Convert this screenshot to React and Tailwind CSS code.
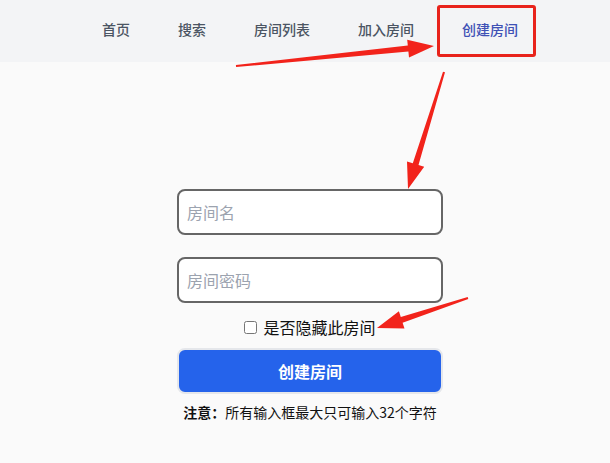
import React from "react";

const navItems = ["首页", "搜索", "房间列表", "加入房间", "创建房间"];

// tapered annotation arrow, tail -> tip
const arrowPoints = (tx, ty, px, py, w0 = 2, w1 = 5, L = 24, H = 8) => {
  const len = Math.hypot(px - tx, py - ty);
  const dx = (px - tx) / len;
  const dy = (py - ty) / len;
  const nx = -dy;
  const ny = dx;
  const bx = px - dx * L;
  const by = py - dy * L;
  const pts = [
    [tx + (nx * w0) / 2, ty + (ny * w0) / 2],
    [bx + (nx * w1) / 2, by + (ny * w1) / 2],
    [bx + nx * H, by + ny * H],
    [px, py],
    [bx - nx * H, by - ny * H],
    [bx - (nx * w1) / 2, by - (ny * w1) / 2],
    [tx - (nx * w0) / 2, ty - (ny * w0) / 2],
  ];
  return pts.map((p) => p.map((v) => v.toFixed(1)).join(",")).join(" ");
};

const Annotations = () => (
  <svg
    className="pointer-events-none absolute left-0 top-0"
    width="610"
    height="463"
    viewBox="0 0 610 463"
  >
    <polygon points={arrowPoints(236, 66, 434, 46, 2, 6, 26, 9)} fill="#f2231b" />
    <polygon points={arrowPoints(444, 72, 408, 189, 2, 6, 26, 9)} fill="#f2231b" />
    <polygon points={arrowPoints(468, 298, 377, 328, 2, 6, 26, 9)} fill="#f2231b" />
  </svg>
);

export default function App() {
  return (
    <div
      className="relative h-[463px] w-[610px] overflow-hidden bg-[#fafafa]"
      style={{ fontFamily: '"Noto Sans CJK SC", "Noto Sans", sans-serif' }}
    >
      {/* nav */}
      <nav className="flex h-[62px] items-center bg-[#f3f4f6] pl-[78px]">
        {navItems.map((item, i) => {
          const active = i === navItems.length - 1;
          return (
            <div key={item} className="relative flex h-[52px] items-center px-6">
              <span
                className={
                  "mb-[4px] text-[14px] font-medium leading-none " +
                  (active ? "text-[#3f51b5]" : "text-[#4b5563]")
                }
              >
                {item}
              </span>
              {active && (
                <div className="absolute -left-px right-[6px] top-0 bottom-0 rounded-[3px] border-[3px] border-[#e8231b]" />
              )}
            </div>
          );
        })}
      </nav>

      {/* form */}
      <div className="flex flex-col items-center pl-[10px] pt-[127px]">
        <input
          placeholder="房间名"
          className="h-[46px] w-[266px] rounded-lg border-2 border-[#666666] bg-white px-[8px] text-[16px] text-gray-800 outline-none placeholder:text-[#9ca3af]"
        />
        <input
          placeholder="房间密码"
          className="mt-[22px] h-[46px] w-[266px] rounded-lg border-2 border-[#666666] bg-white px-[8px] text-[16px] text-gray-800 outline-none placeholder:text-[#9ca3af]"
        />
        <label className="mt-[13px] flex h-[22px] items-center gap-[6px] text-[16px] leading-none text-[#111111]">
          <input type="checkbox" className="h-[13px] w-[13px]" />
          是否隐藏此房间
        </label>
        <button className="mt-[10px] h-[46px] w-[266px] rounded-lg border-2 border-[#e5e7eb] bg-[#2563eb] text-[16px] font-bold text-white">
          创建房间
        </button>
        <p className="mt-[11px] text-[14px] leading-none text-[#111111]">
          <span className="font-bold">注意：</span>所有输入框最大只可输入32个字符
        </p>
      </div>

      <Annotations />
    </div>
  );
}
